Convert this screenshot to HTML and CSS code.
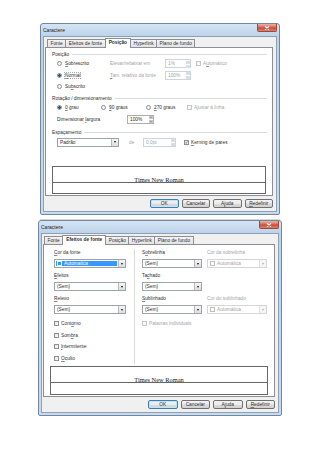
FILE: index.html
```html
<!DOCTYPE html>
<html lang="pt">
<head>
    <meta charset="UTF-8">
    <meta name="viewport" content="width=device-width, initial-scale=1.0">
    <title>Caractere</title>
    <link rel="stylesheet" href="styles.css">
</head>
<body>
<div class="page">

    <!-- Dialog 1: Posição -->
    <div class="window win-pos">
        <div class="titlebar">
            <span class="title">Caractere</span>
            <span class="close"><svg viewBox="0 0 6 4" width="6" height="4"><path d="M1 0.3 L5 3.7 M5 0.3 L1 3.7" stroke="#fff" stroke-width="1.1"/></svg></span>
        </div>
        <div class="client">
            <div class="tabs">
                <span class="tab">Fonte</span>
                <span class="tab">Efeitos de fonte</span>
                <span class="tab active">Posição</span>
                <span class="tab">Hyperlink</span>
                <span class="tab">Plano de fundo</span>
            </div>
            <div class="panel">
                <div class="group">Posição</div>
                <div class="row row-sup">
                    <span class="opt w-pos"><i class="radio"></i><span><u>S</u>obrescrito</span></span>
                    <span class="w-elev off">Elevar/rebaixar em</span>
                    <span class="spin w-spin off"><span class="val">1%</span><span class="arrows"><i class="up"></i><i class="down"></i></span></span>
                    <span class="opt check-opt off"><i class="check"></i><span>A<u>u</u>tomático</span></span>
                </div>
                <div class="row row-normal">
                    <span class="opt w-pos"><i class="radio on"></i><span class="focus"><u>N</u>ormal</span></span>
                    <span class="w-elev off"><u>T</u>am. relativo da fonte</span>
                    <span class="spin w-spin off"><span class="val">100%</span><span class="arrows"><i class="up"></i><i class="down"></i></span></span>
                </div>
                <div class="row row-sub">
                    <span class="opt"><i class="radio"></i><span>Su<u>b</u>scrito</span></span>
                </div>

                <div class="group group-rot">Rotação / dimensionamento</div>
                <div class="row row-rot">
                    <span class="opt w-r1"><i class="radio on"></i><span><u>0</u> grau</span></span>
                    <span class="opt w-r2"><i class="radio"></i><span><u>9</u>0 graus</span></span>
                    <span class="opt w-r3"><i class="radio"></i><span><u>2</u>70 graus</span></span>
                    <span class="opt check-opt off"><i class="check"></i><span>Ajustar à linha</span></span>
                </div>
                <div class="row row-scale">
                    <span class="w-scale">Dimensionar <u>l</u>argura</span>
                    <span class="spin w-spin2"><span class="val">100%</span><span class="arrows"><i class="up"></i><i class="down"></i></span></span>
                </div>

                <div class="group group-space">Espaçamento</div>
                <div class="row row-space">
                    <span class="combo w-pad"><span class="val">Padrão</span><span class="drop"></span></span>
                    <span class="w-de off">de</span>
                    <span class="spin w-spin3 off"><span class="val">0,0pt</span><span class="arrows"><i class="up"></i><i class="down"></i></span></span>
                    <span class="opt check-opt w-kern"><i class="check on"><svg viewBox="0 0 5 5" width="3" height="3"><path d="M0.6 2.6 L2 4 L4.4 0.9" stroke="#1f3f6a" stroke-width="1" fill="none"/></svg></i><span><u>K</u>erning de pares</span></span>
                </div>

                <div class="preview"><div class="preview-line"><span>Times New Roman</span></div></div>
            </div>
            <div class="buttons">
                <span class="btn default">OK</span>
                <span class="btn">Cancelar</span>
                <span class="btn"><span>A<u>j</u>uda</span></span>
                <span class="btn"><span><u>R</u>edefinir</span></span>
            </div>
        </div>
    </div>

    <div class="divider"></div>

    <!-- Dialog 2: Efeitos de fonte -->
    <div class="window win-fx">
        <div class="titlebar">
            <span class="title">Caractere</span>
            <span class="close"><svg viewBox="0 0 6 4" width="6" height="4"><path d="M1 0.3 L5 3.7 M5 0.3 L1 3.7" stroke="#fff" stroke-width="1.1"/></svg></span>
        </div>
        <div class="client">
            <div class="tabs">
                <span class="tab">Fonte</span>
                <span class="tab active">Efeitos de fonte</span>
                <span class="tab">Posição</span>
                <span class="tab">Hyperlink</span>
                <span class="tab">Plano de fundo</span>
            </div>
            <div class="panel panel-fx">
                <div class="fx">
                    <div class="fx-left">
                        <div class="field">
                            <span class="lbl"><u>C</u>or da fonte</span>
                            <span class="combo sel"><span class="val"><i class="swatch"></i><span>Automatica</span></span><span class="drop"></span></span>
                        </div>
                        <div class="field">
                            <span class="lbl"><u>E</u>feitos</span>
                            <span class="combo"><span class="val">(Sem)</span><span class="drop"></span></span>
                        </div>
                        <div class="field">
                            <span class="lbl"><u>R</u>elevo</span>
                            <span class="combo"><span class="val">(Sem)</span><span class="drop"></span></span>
                        </div>
                        <span class="opt check-opt chk-row"><i class="check"></i><span>Cont<u>o</u>rno</span></span>
                        <span class="opt check-opt chk-row"><i class="check"></i><span>Som<u>b</u>ra</span></span>
                        <span class="opt check-opt chk-row"><i class="check"></i><span><u>I</u>ntermitente</span></span>
                        <span class="opt check-opt chk-row"><i class="check"></i><span><u>O</u>culto</span></span>
                    </div>
                    <div class="fx-right">
                        <div class="field">
                            <span class="lbl">S<u>o</u>brelinha</span>
                            <span class="combo"><span class="val">(Sem)</span><span class="drop"></span></span>
                        </div>
                        <div class="field off">
                            <span class="lbl">Cor da sobrelinha</span>
                            <span class="combo"><span class="val"><i class="swatch"></i><span>Automática</span></span><span class="drop"></span></span>
                        </div>
                        <div class="field">
                            <span class="lbl">Ta<u>c</u>hado</span>
                            <span class="combo"><span class="val">(Sem)</span><span class="drop"></span></span>
                        </div>
                        <div class="field"></div>
                        <div class="field">
                            <span class="lbl"><u>S</u>ublinhado</span>
                            <span class="combo"><span class="val">(Sem)</span><span class="drop"></span></span>
                        </div>
                        <div class="field off">
                            <span class="lbl">Cor do sublinhado</span>
                            <span class="combo"><span class="val"><i class="swatch"></i><span>Automática</span></span><span class="drop"></span></span>
                        </div>
                        <span class="opt check-opt chk-row off span2"><i class="check"></i><span>Palavras individuais</span></span>
                    </div>
                </div>
                <div class="preview"><div class="preview-line"><span>Times New Roman</span></div></div>
            </div>
            <div class="buttons">
                <span class="btn default">OK</span>
                <span class="btn">Cancelar</span>
                <span class="btn"><span>A<u>j</u>uda</span></span>
                <span class="btn"><span><u>R</u>edefinir</span></span>
            </div>
        </div>
    </div>

</div>
</body>
</html>
```

FILE: styles.css
```css
* {
  box-sizing: border-box;
  margin: 0;
  padding: 0;
}

body {
  font-family: "Liberation Sans", Arial, sans-serif;
  font-size: 4.8px;
  color: #2e2e2e;
  background: #fff;
}

u {
  text-decoration-thickness: 0.5px;
  text-decoration-color: rgba(0, 0, 0, 0.45);
}

.page {
  padding-top: 23px;
}

/* window chrome */
.window {
  display: flex;
  flex-direction: column;
  border: 1px solid #71879e;
  border-radius: 3px 3px 2px 2px;
  background: linear-gradient(#d5e4f3, #bdd3ea 12px, #c8daee);
  padding: 0 2px 2px;
}

.win-pos {
  margin-left: 40px;
  width: 240px;
  height: 192px;
}

.win-fx {
  margin-left: 38px;
  width: 244px;
  height: 196px;
}

.divider {
  margin: 4px 0 0 40px;
  width: 240px;
  height: 1px;
  background: #d6d6d6;
}

.titlebar {
  display: flex;
  justify-content: space-between;
  height: 12px;
}

.title {
  padding-top: 2.5px;
  font-size: 5px;
  color: #1a1a1a;
}

.close {
  width: 20px;
  height: 8px;
  display: flex;
  align-items: center;
  justify-content: center;
  border: 1px solid #9a4a3e;
  border-top: none;
  border-radius: 0 0 2px 2px;
  background: linear-gradient(#eeb3a6, #d9705d 45%, #c84a36 55%, #dc826c);
}

.client {
  flex: 1;
  display: flex;
  flex-direction: column;
  border: 1px solid #8ba1b8;
  background: #f0f0f0;
  padding: 1px 3px 3px 1px;
}

/* tabs */
.tabs {
  display: flex;
  align-items: flex-end;
  height: 9px;
  margin-left: 2px;
}

.win-fx .tabs {
  margin-left: 1px;
}

.tab {
  height: 8px;
  line-height: 7px;
  padding: 0 2.5px;
  border: 1px solid #8c8e94;
  border-bottom: none;
  margin-right: -1px;
  background: linear-gradient(#f4f4f4, #e3e3e3);
  white-space: nowrap;
}

.tab.active {
  position: relative;
  z-index: 1;
  height: 10px;
  line-height: 8px;
  margin-bottom: -1px;
  padding: 0 3px;
  background: #fff;
  font-weight: bold;
}

.panel {
  height: 149px;
  display: flex;
  flex-direction: column;
  border: 1px solid #8c8e94;
  background: #fff;
  padding-top: 2px;
}

.panel-fx {
  height: 153px;
  padding-top: 4px;
}

/* group headings with rule */
.group {
  display: flex;
  align-items: center;
  gap: 3px;
  height: 8px;
  margin: 0 5px 0 6px;
  white-space: nowrap;
}

.group::after {
  content: "";
  flex: 1;
  height: 1px;
  background: #dadada;
}

.group-rot {
  margin-top: 3px;
}

.group-space {
  margin-top: 2px;
}

.row {
  display: flex;
  align-items: center;
  padding-left: 11px;
  white-space: nowrap;
}

.row-sup { height: 11px; }
.row-normal { height: 12px; }
.row-sub { height: 10px; }
.row-rot { height: 10px; }
.row-scale { height: 14px; }
.row-space { height: 10px; margin-top: 1px; }

.w-pos { width: 53px; }
.w-elev { width: 55px; }
.w-spin { width: 26px; margin-right: 5px; }
.w-r1 { width: 44px; }
.w-r2 { width: 45px; }
.w-r3 { width: 41px; }
.w-scale { width: 70px; }
.w-spin2 { width: 27px; }
.w-pad { width: 62px; }
.w-de { width: 14px; margin-left: 10px; }
.w-spin3 { width: 33px; }
.w-kern { margin-left: 8px; }

.off {
  color: #a5a5a5;
}

/* radio / check */
.opt {
  display: flex;
  align-items: center;
  gap: 3px;
  white-space: nowrap;
}

.check-opt {
  gap: 2px;
}

.radio {
  flex: none;
  width: 5px;
  height: 5px;
  border: 1px solid #8e8f8f;
  border-radius: 50%;
  background: #f5f5f5;
}

.radio.on {
  background: radial-gradient(circle, #214e85 0 1px, #8eaed1 1.4px, #f5f5f5 2px);
}

.check {
  flex: none;
  width: 5px;
  height: 5px;
  display: flex;
  align-items: center;
  justify-content: center;
  border: 1px solid #8e8f8f;
  background: linear-gradient(135deg, #e2e2e2, #fdfdfd);
}

.off .check,
.off .radio {
  border-color: #c6c6c6;
  background: #f7f7f7;
}

.focus {
  outline: 1px dotted #a8a8a8;
  outline-offset: 0;
}

/* spin box */
.spin {
  display: flex;
  height: 9px;
  border: 1px solid #abadb3;
  background: #fff;
}

.spin .val {
  flex: 1;
  line-height: 7px;
  padding-left: 2px;
}

.arrows {
  width: 5px;
  display: flex;
  flex-direction: column;
  gap: 1px;
  padding: 0.5px;
}

.arrows i {
  flex: 1;
  display: flex;
  align-items: center;
  justify-content: center;
  border: 0.5px solid #c9c9c9;
  background: #ececec;
}

.arrows i::after {
  content: "";
  border-left: 1px solid transparent;
  border-right: 1px solid transparent;
}

.arrows .up::after {
  border-bottom: 1px solid #444;
}

.arrows .down::after {
  border-top: 1px solid #444;
}

.spin.off {
  border-color: #c8d5e3;
}

.spin.off .arrows i {
  border-color: #e0e0e0;
  background: #f4f4f4;
}

.spin.off .arrows i::after {
  border-top-color: #b5b5b5;
  border-bottom-color: #b5b5b5;
}

/* combo box */
.combo {
  display: flex;
  height: 9px;
  border: 1px solid #9ea2a9;
  background: #fff;
}

.combo .val {
  flex: 1;
  display: flex;
  align-items: center;
  gap: 2px;
  padding-left: 2px;
  white-space: nowrap;
}

.drop {
  width: 7px;
  display: flex;
  align-items: center;
  justify-content: center;
  border-left: 1px solid #b8b8b8;
  background: linear-gradient(#f6f6f6, #dedede);
}

.drop::after {
  content: "";
  border-left: 1.5px solid transparent;
  border-right: 1.5px solid transparent;
  border-top: 2px solid #111;
}

.combo.sel .val {
  margin: 1px;
  padding-left: 1px;
  background: #3399ff;
  color: #fff;
}

.swatch {
  flex: none;
  width: 5px;
  height: 5px;
  border: 1px solid #e6f1ff;
}

.off .combo {
  border-color: #d6d6d6;
}

.off .swatch {
  border-color: #bdbdbd;
  background: #fff;
}

.off .drop {
  border-left-color: #e0e0e0;
  background: #f6f6f6;
}

.off .drop::after {
  border-top-color: #b0b0b0;
}

/* effects tab layout */
.fx {
  display: flex;
  padding-left: 10px;
}

.fx-left {
  width: 80px;
}

.fx-left .combo {
  width: 72px;
}

.fx-right {
  display: grid;
  grid-template-columns: 60px 60px;
  column-gap: 5px;
  align-content: start;
  border-left: 1px solid #d9d9d9;
  padding-left: 7px;
}

.field {
  display: flex;
  flex-direction: column;
  height: 23px;
}

.field .lbl {
  height: 8px;
  line-height: 8px;
  margin-bottom: 2px;
}

.chk-row {
  height: 11.5px;
}

.span2 {
  grid-column: span 2;
}

/* preview */
.preview {
  height: 28px;
  margin: 19px 6px 0;
  border: 1px solid #666;
  background: #fff;
}

.panel-fx .preview {
  height: 29px;
  margin-top: 2px;
}

.preview-line {
  height: 16px;
  display: flex;
  align-items: flex-end;
  justify-content: center;
  border-bottom: 1px solid #666;
}

.preview-line span {
  font-family: "Liberation Serif", "Times New Roman", serif;
  font-size: 6.4px;
  line-height: 6px;
  margin-bottom: -1px;
  color: #222;
}

/* buttons */
.buttons {
  display: flex;
  justify-content: flex-end;
  gap: 3px;
  margin-top: 3px;
}

.btn {
  width: 28.5px;
  height: 9px;
  display: flex;
  align-items: center;
  justify-content: center;
  border: 1px solid #707070;
  border-radius: 2px;
  background: linear-gradient(#f3f3f3, #ebebeb 50%, #dddddd 50%, #d0d0d0);
}

.win-fx .btn {
  width: 29.5px;
}

.btn.default {
  border-color: #3c7fb1;
  box-shadow: inset 0 0 0 1px #bfe3f9;
}
```
